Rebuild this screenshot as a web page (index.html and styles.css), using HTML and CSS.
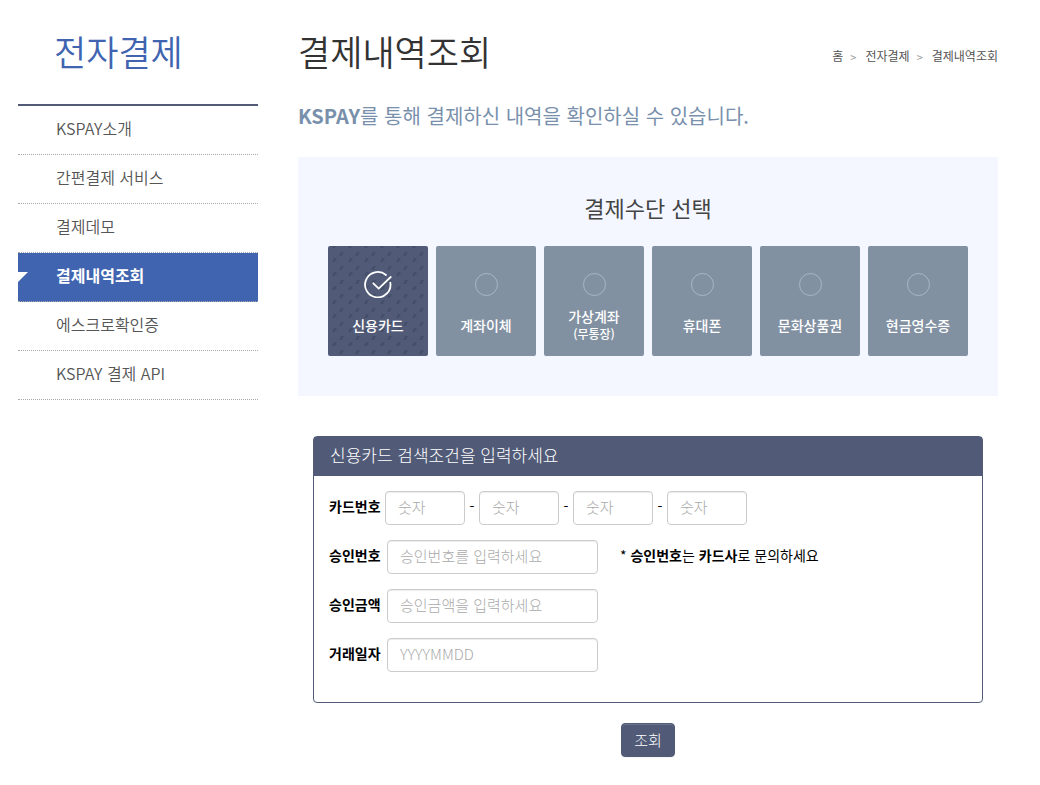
FILE: index.html
```html
<!DOCTYPE html>
<html lang="ko">

<head>
    <meta charset="UTF-8">
    <meta name="viewport" content="width=device-width, initial-scale=1.0">
    <title>결제내역조회</title>
    <link rel="stylesheet" href="styles.css">
</head>

<body>
    <div class="wrap">
        <aside class="side">
            <h2 class="side-title">전자결제</h2>
            <nav>
                <ul class="menu">
                    <li><a href="#">KSPAY소개</a></li>
                    <li><a href="#">간편결제 서비스</a></li>
                    <li><a href="#">결제데모</a></li>
                    <li class="on"><a href="#">결제내역조회</a></li>
                    <li><a href="#">에스크로확인증</a></li>
                    <li><a href="#">KSPAY 결제 API</a></li>
                </ul>
            </nav>
        </aside>

        <main class="content">
            <header class="top">
                <h1>결제내역조회</h1>
                <div class="location">
                    <a href="#">홈</a>
                    <span class="arrow">&gt;</span>
                    <a href="#">전자결제</a>
                    <span class="arrow">&gt;</span>
                    <a href="#">결제내역조회</a>
                </div>
            </header>

            <p class="lead"><strong>KSPAY</strong>를 통해 결제하신 내역을 확인하실 수 있습니다.</p>

            <section class="pay">
                <h3>결제수단 선택</h3>
                <div class="pay-list">
                    <label class="pay-item on">
                        <span class="mark">
                            <input type="radio" name="pay" checked>
                            <svg width="30" height="28" viewBox="0 0 30 28" fill="none" stroke="#fff" stroke-width="1.8" stroke-linecap="round">
                                <path d="M23 5A12.7 12.7 0 1 0 27.3 12.6" />
                                <path d="M10.3 13.3L15.7 18.6L27.7 7" />
                            </svg>
                        </span>
                        <span class="pay-name">신용카드</span>
                    </label>
                    <label class="pay-item">
                        <span class="mark"><input type="radio" name="pay"></span>
                        <span class="pay-name">계좌이체</span>
                    </label>
                    <label class="pay-item">
                        <span class="mark"><input type="radio" name="pay"></span>
                        <span class="pay-name">가상계좌<small>(무통장)</small></span>
                    </label>
                    <label class="pay-item">
                        <span class="mark"><input type="radio" name="pay"></span>
                        <span class="pay-name">휴대폰</span>
                    </label>
                    <label class="pay-item">
                        <span class="mark"><input type="radio" name="pay"></span>
                        <span class="pay-name">문화상품권</span>
                    </label>
                    <label class="pay-item">
                        <span class="mark"><input type="radio" name="pay"></span>
                        <span class="pay-name">현금영수증</span>
                    </label>
                </div>
            </section>

            <form class="search">
                <div class="panel">
                    <div class="panel-head">신용카드 검색조건을 입력하세요</div>
                    <div class="panel-body">
                        <div class="row card-row">
                            <label for="card1">카드번호</label>
                            <input type="text" id="card1" placeholder="숫자" maxlength="4">
                            <span class="dash">-</span>
                            <input type="text" aria-label="카드번호 2" placeholder="숫자" maxlength="4">
                            <span class="dash">-</span>
                            <input type="text" aria-label="카드번호 3" placeholder="숫자" maxlength="4">
                            <span class="dash">-</span>
                            <input type="text" aria-label="카드번호 4" placeholder="숫자" maxlength="4">
                        </div>
                        <div class="row">
                            <label for="authNo">승인번호</label>
                            <input type="text" id="authNo" placeholder="승인번호를 입력하세요">
                            <p class="note">* <b>승인번호</b>는 <b>카드사</b>로 문의하세요</p>
                        </div>
                        <div class="row">
                            <label for="amount">승인금액</label>
                            <input type="text" id="amount" placeholder="승인금액을 입력하세요">
                        </div>
                        <div class="row">
                            <label for="tradeDate">거래일자</label>
                            <input type="text" id="tradeDate" placeholder="YYYYMMDD">
                        </div>
                    </div>
                </div>
                <button type="button" class="btn">조회</button>
            </form>
        </main>
    </div>
</body>

</html>
```
FILE: styles.css
```css
* {
    margin: 0;
    padding: 0;
    box-sizing: border-box;
}

body,
input,
button {
    font-family: "Noto Sans CJK KR", "Liberation Sans", sans-serif;
}

body {
    background: #fff;
    color: #000;
    font-size: 14px;
}

a {
    color: inherit;
    text-decoration: none;
}

.wrap {
    display: flex;
    gap: 40px;
    padding: 0 42px 28px 18px;
}

/* side menu */
.side {
    flex: 0 0 240px;
}

.side-title {
    padding: 0 0 2px 36px;
    line-height: 102px;
    font-size: 35px;
    font-weight: 350;
    color: #4064b0;
}

.menu {
    list-style: none;
    border-top: 2px solid #515b78;
}

.menu li {
    position: relative;
    border-bottom: 1px dotted #aaa;
}

.menu a {
    display: block;
    padding: 0 0 4px 38px;
    line-height: 44px;
    font-size: 16px;
    font-weight: 350;
    color: #555;
}

.menu .on {
    background: #4064b0;
}

.menu .on a {
    font-weight: bold;
    color: #fff;
}

.menu .on::before {
    content: "";
    position: absolute;
    left: 0;
    top: 19px;
    border-top: 10px solid #fff;
    border-right: 10px solid transparent;
}

/* content */
.content {
    flex: 1;
    min-width: 0;
}

.top {
    display: flex;
    align-items: center;
    justify-content: space-between;
}

.top h1 {
    padding-bottom: 2px;
    line-height: 102px;
    font-size: 35px;
    font-weight: 350;
    color: #333;
}

.location {
    display: flex;
    align-items: center;
    gap: 7px;
    padding-top: 6px;
    font-size: 12px;
    color: #555;
}

.location .arrow {
    padding: 3px 2px 0 0;
    font-size: 11px;
    color: #999;
}

.lead {
    margin-bottom: 29px;
    line-height: 24px;
    font-size: 20px;
    color: #7890ab;
}

/* payment method */
.pay {
    padding: 36px 30px 40px;
    background: #f4f7ff;
}

.pay h3 {
    margin-bottom: 25px;
    line-height: 28px;
    font-size: 22px;
    font-weight: 400;
    color: #444;
    text-align: center;
}

.pay-list {
    display: grid;
    grid-template-columns: repeat(6, 1fr);
    gap: 8px;
}

.pay-item {
    display: flex;
    flex-direction: column;
    align-items: center;
    height: 110px;
    padding-top: 24px;
    border-radius: 2px;
    background: #8291a2;
    color: #fff;
    cursor: pointer;
}

.pay-item.on {
    background: #515b78 url("data:image/svg+xml,%3Csvg xmlns='http://www.w3.org/2000/svg' width='16' height='14'%3E%3Cpath fill='%23444f69' d='M13 6h3l-2 4h-3zM6 12h3l-2 4h-3zM6-2h3l-2 4h-3z'/%3E%3C/svg%3E");
}

.mark {
    display: grid;
    place-items: center;
    height: 28px;
}

.mark input,
.mark svg {
    grid-area: 1 / 1;
}

.mark input {
    appearance: none;
    width: 23px;
    height: 23px;
    border: 1px solid #a9b7c4;
    border-radius: 50%;
}

.mark input:checked {
    border-color: transparent;
}

.pay-name {
    display: flex;
    flex: 1;
    flex-direction: column;
    justify-content: center;
    padding-bottom: 5px;
    line-height: 18px;
    font-size: 14px;
    font-weight: 500;
    text-align: center;
}

.pay-name small {
    font-size: 12px;
}

/* search form */
.search {
    display: flex;
    flex-direction: column;
    align-items: center;
    gap: 20px;
    padding: 40px 15px 0;
}

.panel {
    width: 100%;
    border: 1px solid #515b78;
    border-radius: 4px;
}

.panel-head {
    padding: 0 16px 4px;
    line-height: 35px;
    font-size: 17px;
    font-weight: 300;
    background: #515b78;
    color: #fff;
}

.panel-body {
    display: flex;
    flex-direction: column;
    gap: 15px;
    padding: 15px 15px 30px;
}

.row {
    display: flex;
    align-items: center;
}

.row label {
    width: 53px;
    margin-right: 5px;
    padding-bottom: 5px;
    font-weight: bold;
    white-space: nowrap;
}

.row input {
    width: 211px;
    height: 34px;
    padding: 4px 12px 8px;
    border: 1px solid #ccc;
    border-radius: 4px;
    box-shadow: inset 0 1px 1px rgba(0, 0, 0, 0.075);
    font-size: 15px;
    font-weight: 300;
    color: #555;
}

.row input::placeholder {
    color: #aaa;
}

.card-row label {
    margin-right: 3px;
}

.card-row input {
    width: 80px;
}

.dash {
    width: 14px;
    padding-bottom: 5px;
    text-align: center;
}

.note {
    margin-left: 22px;
    padding-bottom: 5px;
}

.btn {
    width: 54px;
    height: 34px;
    padding-bottom: 2px;
    border: 1px solid #515b78;
    border-radius: 4px;
    background: #515b78;
    box-shadow: inset 0 1px 0 rgba(255, 255, 255, 0.15), 0 1px 2px rgba(0, 0, 0, 0.05);
    color: #fff;
    font-size: 15px;
    font-weight: 300;
    cursor: pointer;
}
```
